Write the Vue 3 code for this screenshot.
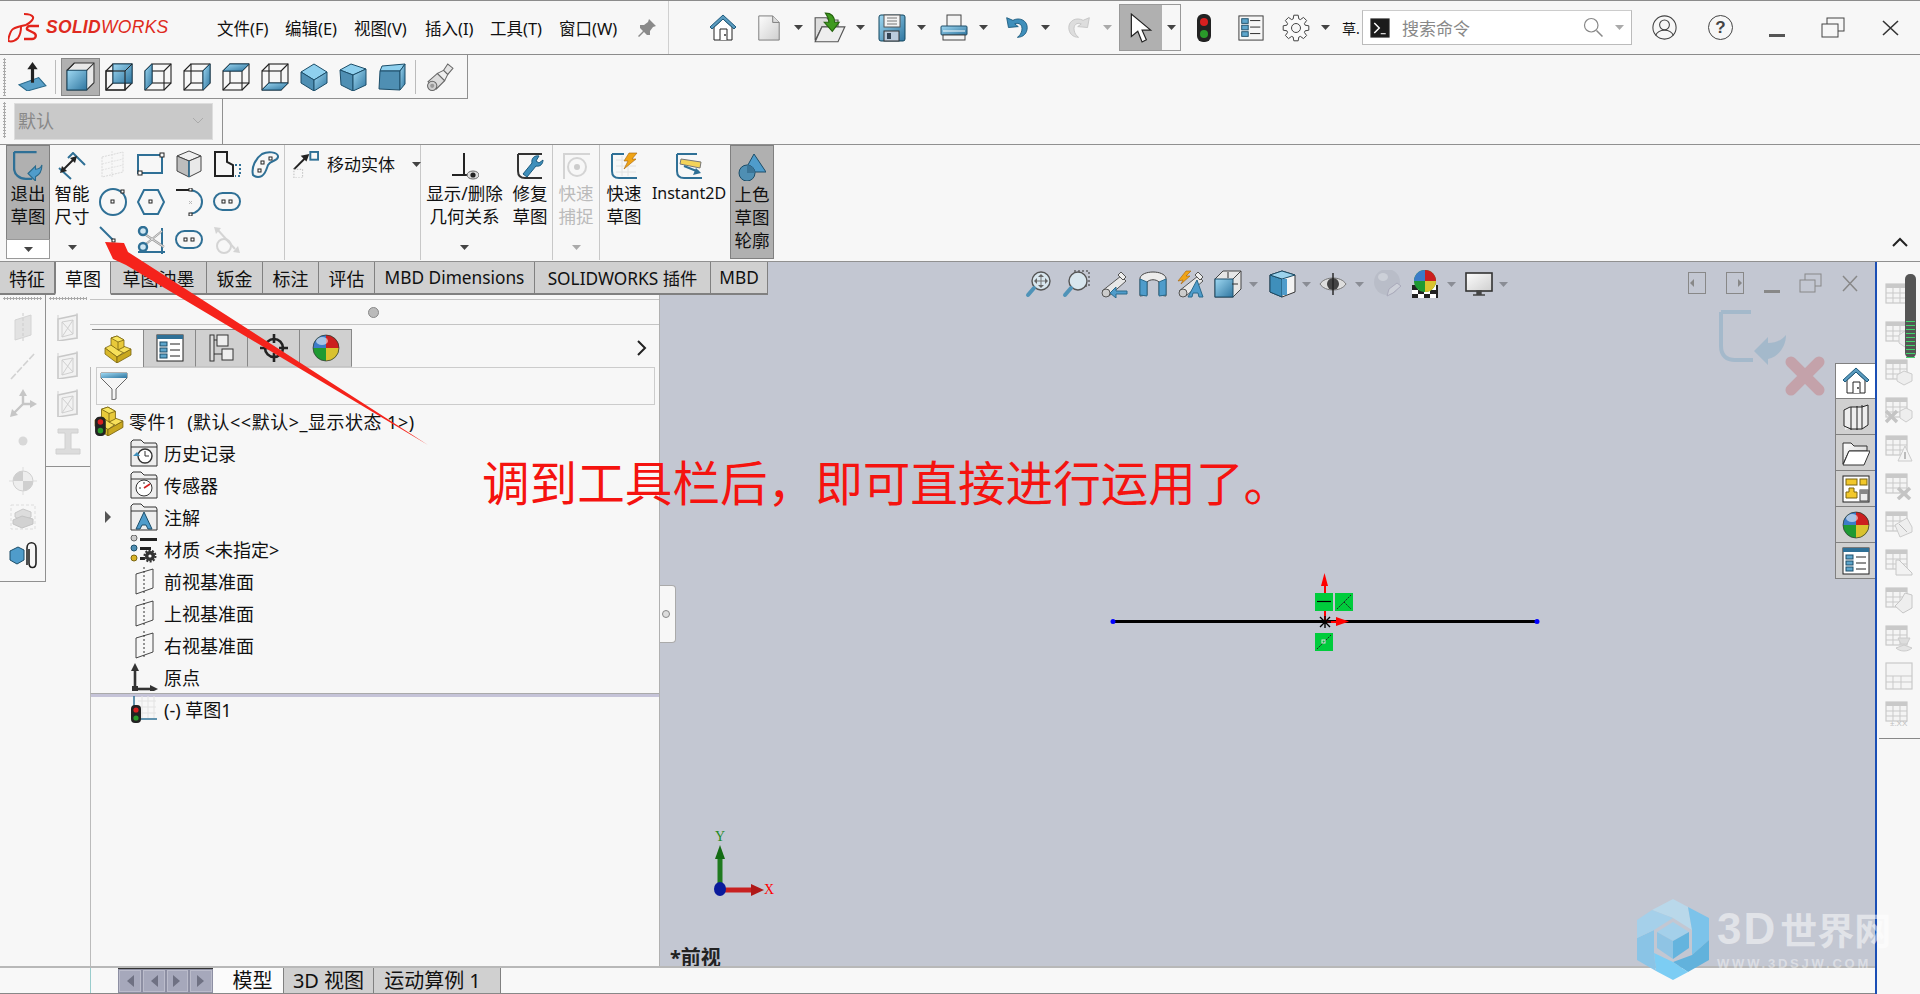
<script setup>
import { h } from 'vue'

const S = '#2f7096'
const wire = 'fill="none" stroke="#222" stroke-width="1.1"'
const cubeFrame = `<rect x="1" y="8" width="19" height="19" ${wire}/><rect x="8" y="1" width="19" height="19" ${wire}/><path d="M1 8 8 1M20 8l7-7M1 27l7-7M20 27l7-7" ${wire}/>`
const face = p => `<polygon points="${p}" fill="url(#gBlue)" stroke="#1c4d68"/>`
const iso = (a, b, c) => `<polygon points="${a}" fill="#8fd0ee" stroke="#1c4d68"/><polygon points="${b}" fill="#4f8fb3" stroke="#1c4d68"/><polygon points="${c}" fill="url(#gBlue)" stroke="#1c4d68"/>`

const gear = (() => {
  const pts = []
  const n = 8
  for (let i = 0; i < n; i++) {
    const a = (i / n) * Math.PI * 2
    for (const [r, d] of [[9.5, -0.3], [13, -0.17], [13, 0.17], [9.5, 0.3]]) {
      pts.push((14 + r * Math.cos(a + d)).toFixed(1) + ',' + (14 + r * Math.sin(a + d)).toFixed(1))
    }
  }
  return `<polygon points="${pts.join(' ')}" fill="#fafafa" stroke="#444" stroke-width="1"/><circle cx="14" cy="14" r="4.5" fill="#f7f7f7" stroke="#444"/>`
})()

const tbl = (extra = '', c = '#c9c9c9') => `<rect x="1" y="2" width="21" height="19" fill="#f4f4f4" stroke="${c}" stroke-width="1.2"/><rect x="1" y="2" width="21" height="4" fill="${c}"/><path d="M1 11h21M1 16h21M8 6v15M15 6v15" stroke="${c}" fill="none"/>${extra}`
const frame = '<polygon points="4,6 23,2 23,25 4,28" fill="#f2f2f2" stroke="#c8c8c8" stroke-width="1.5"/><polygon points="8,9 19,7 19,21 8,24" fill="none" stroke="#d0d0d0"/><path d="M8 9 19 21M19 7 8 24M4 2v26M23 0v26" stroke="#cfcfcf" fill="none"/>'
const plane = '<polygon points="6,7 23,2 23,21 6,27" fill="none" stroke="#333" stroke-width=".9"/><path d="M14 0v28" stroke="#333" stroke-dasharray="2 2" fill="none"/>'
const ball = '<circle cx="14" cy="14" r="13" fill="#1f9a32"/><path d="M14 14V1A13 13 0 0 0 1 14z" fill="#3c7cc8"/><path d="M14 14V1a13 13 0 0 1 13 13z" fill="#cc1f1f"/><path d="M14 14h13a13 13 0 0 1-13 13z" fill="#d9c22e"/><ellipse cx="10" cy="7" rx="6" ry="4" fill="#fff" opacity=".55"/><circle cx="14" cy="14" r="13" fill="none" stroke="#333" stroke-width=".7"/>'
const listIco = `<rect x="1" y="1" width="26" height="26" fill="#fff" stroke="#222"/><rect x="1" y="1" width="26" height="4" fill="${S}"/><rect x="4" y="8" width="7" height="4" fill="#5ea6cc" stroke="#1c4d68"/><rect x="4" y="14" width="7" height="4" fill="#5ea6cc" stroke="#1c4d68"/><rect x="4" y="20" width="7" height="4" fill="#5ea6cc" stroke="#1c4d68"/><path d="M14 10h10M14 16h10M14 22h10" stroke="#222"/>`
const homeIco = `<path d="M5 13v13h18V13L14 5z" fill="#fff" stroke="#222"/><path d="M1 13 14 1l13 12-2 2L14 5 3 15z" fill="#5a9bbf" stroke="#1d5a7d"/><path d="M11 26V15h7v11" fill="#fff" stroke="#222"/><circle cx="16" cy="21" r=".9" fill="#222"/>`
const part = '<g stroke="#7a6510" stroke-width=".8"><polygon points="1,13 7,10 20,17 13,22" fill="#f7e05a"/><polygon points="1,13 13,22 13,28 1,19" fill="#d9b82a"/><polygon points="13,22 27,14 27,20 13,28" fill="#c9a820"/><polygon points="19,11 27,14 20,18 14,15" fill="#f7e05a"/><polygon points="7,3 13,1 20,5 20,12 14,15 7,10" fill="#e8c93a"/><polygon points="7,3 13,1 20,5 14,7" fill="#f9e660"/><path d="M14 7v8" fill="none"/></g>'
const lights = '<rect x="1" y="10" width="10" height="18" rx="4" fill="#222"/><circle cx="6" cy="15" r="2.6" fill="#d81f1f"/><circle cx="6" cy="23" r="2.6" fill="#2a9a2a"/>'
const folder = inner => `<path d="M1 27V3l2-2h8l3 3h12l1 2v21z" fill="#eee" stroke="#333"/><path d="M1 8h26" stroke="#333"/>${inner}`
const grayMag = (x) => `<circle cx="16" cy="11" r="9" fill="#d8e6ee" stroke="#555" stroke-width="1.4"/><path d="M9 18 3 25" stroke="#4f93b8" stroke-width="4" stroke-linecap="round"/>${x}`
const bino = '<path d="M2 21 21 6l5 5L9 26z" fill="#e8e8e8" stroke="#555"/><circle cx="6" cy="23" r="4" fill="#ccc" stroke="#555"/><path d="M18 5l3-3 5 5-3 3z" fill="#eee" stroke="#555"/>'

const icons = {
  normal: '<path d="M14 19V5" stroke="#222" stroke-width="3"/><polygon points="14,0 9,7 19,7" fill="#222"/><polygon points="1,22 20,15 27,23 9,28" fill="#5aa0c8" stroke="#2a6a8c"/><path d="M14 20V8" stroke="#222" stroke-width="3"/>',
  vFront: `<polygon points="8,1 27,1 27,20 20,27 1,27 1,8" fill="#e8e8e8" stroke="#333"/><rect x="1" y="8" width="19" height="19" fill="url(#gBlue)" stroke="#1c4d68"/><path d="M20 8l7-7M1 8l7-7" stroke="#333"/>`,
  vBack: cubeFrame + `<rect x="8" y="1" width="19" height="19" fill="url(#gBlue)" stroke="#1c4d68"/><path d="M1 8 8 1M20 8l7-7" stroke="#222"/><rect x="1" y="8" width="19" height="19" fill="none" stroke="#222" stroke-width="1.1"/>`,
  vLeft: cubeFrame + face('1,8 8,1 8,20 1,27'),
  vRight: cubeFrame + face('20,8 27,1 27,20 20,27'),
  vTop: cubeFrame + face('1,8 8,1 27,1 20,8'),
  vBottom: cubeFrame + face('1,27 8,20 27,20 20,27'),
  iso1: iso('14,1 27,9 14,17 1,9', '1,9 14,17 14,28 1,20', '27,9 14,17 14,28 27,20'),
  iso2: iso('12,1 27,6 14,12 1,7', '1,7 14,12 14,28 2,22', '27,6 14,12 14,28 27,22'),
  iso3: iso('4,3 27,1 22,8 2,8', '2,8 22,8 22,27 1,26', '27,1 22,8 22,27 27,21'),
  torch: '<path d="M2 19 11 11l7 7-8 8z" fill="#dcdcdc" stroke="#666"/><path d="M11 11l6-3 4 4-3 6z" fill="#eee" stroke="#666"/><path d="M17 8l4-6 5 4-5 6z" fill="#e4e4e4" stroke="#666"/><circle cx="6" cy="23" r="4.5" fill="#cfcfcf" stroke="#666"/><circle cx="6" cy="23" r="2" fill="#999"/>',
  home: homeIco,
  doc: '<path d="M3 1h15l7 7v19H3z" fill="url(#gGray)" stroke="#777"/><path d="M18 1v7h7" fill="#ddd" stroke="#777"/>',
  open: '<path d="M1 25V5h10l2 2h8v6H7z" fill="#ddd" stroke="#555"/><path d="M1 26l6-13h20l-6 13z" fill="#eee" stroke="#555"/><path d="M10 1c6 0 8 3 8 8h4l-6 8-7-8h4c0-3-1-5-3-8z" fill="#3f9a1f" stroke="#26660f"/>',
  save: '<rect x="1" y="1" width="26" height="26" rx="2" fill="url(#gBlue)" stroke="#12465f"/><rect x="6" y="1" width="16" height="12" fill="#f3f3f3" stroke="#555"/><path d="M9 4h10M9 7h10M9 10h10" stroke="#777"/><rect x="6" y="17" width="15" height="10" fill="#bcd" stroke="#333"/><rect x="9" y="19" width="4" height="6" fill="#345"/>',
  print: '<rect x="7" y="1" width="14" height="12" fill="#f4f4f4" stroke="#444"/><rect x="1" y="12" width="26" height="9" rx="1" fill="url(#gBlue)" stroke="#1c4d68"/><path d="M3 17h22" stroke="#fff"/><rect x="3" y="21" width="22" height="5" fill="#f4f4f4" stroke="#444"/>',
  undo: '<path d="M3 3l2 11 11-1-4-3c5-2 9 1 8 7-.5 3-2 6-5 8 7 0 11-5 11-11C26 6 17 2 10 6z" fill="#3f8fbb" stroke="#1c5b7e"/>',
  redo: '<path d="M25 3l-2 11-11-1 4-3c-5-2-9 1-8 7 .5 3 2 6 5 8-7 0-11-5-11-11C2 6 11 2 18 6z" fill="#ddd" stroke="#c4c4c4"/>',
  cursor: '<path d="M5 1v21l6-5 4 10 4-2-4-9h8z" fill="#fff" stroke="#222" stroke-width="1.1"/>',
  light: '<rect x="7" y="0" width="14" height="28" rx="6" fill="#222"/><circle cx="14" cy="8" r="4" fill="#d81f1f"/><circle cx="14" cy="20" r="4" fill="#2a9a2a"/>',
  list: `<rect x="1" y="1" width="26" height="26" fill="#f7f7f7" stroke="#333"/><rect x="4" y="4" width="7" height="5" fill="#5ea6cc" stroke="#1c4d68"/><rect x="4" y="11" width="7" height="5" fill="#5ea6cc" stroke="#1c4d68"/><rect x="4" y="18" width="7" height="5" fill="#5ea6cc" stroke="#1c4d68"/><path d="M13 6h11M13 13h11M13 20h11" stroke="#222"/>`,
  gear,
  term: '<rect x="1" y="1" width="26" height="26" fill="#1b1b1b" stroke="#555"/><path d="M6 7l7 7-7 7" fill="none" stroke="#fff" stroke-width="2"/><path d="M15 22h7" stroke="#fff" stroke-width="1.5"/>',
  mag: '<circle cx="11" cy="11" r="9" fill="none" stroke="#888" stroke-width="1.6"/><path d="M18 18l8 8" stroke="#888" stroke-width="2"/>',
  user: '<circle cx="14" cy="14" r="13" fill="none" stroke="#444" stroke-width="1.2"/><circle cx="14" cy="11" r="5.5" fill="none" stroke="#444" stroke-width="1.2"/><path d="M4 23c2-5 6-6 10-6s8 1 10 6" fill="none" stroke="#444" stroke-width="1.2"/>',
  exit: `<path d="M1 1v15c0 6 5 10 11 10h6M1 1h21" fill="none" stroke="${S}" stroke-width="2.2"/><path d="M14 21l7-7v3c2 0 5-1 6-4 0 6-2 9-6 11v4z" fill="#4f9ccb" stroke="#2a6a8c"/>`,
  dim: `<path d="M10 6 15 1l12 12M1 16l12 11" fill="none" stroke="${S}" stroke-width="2"/><path d="M5 18 16 7" stroke="#222" stroke-width="2"/><polygon points="2,21 4,14 9,19" fill="#222"/><polygon points="19,4 12,6 17,11" fill="#222"/>`,
  faintGrid: '<polygon points="3,7 24,2 24,22 3,27" fill="none" stroke="#dadada" stroke-dasharray="2 1"/><path d="M13 1v26M3 14l21-5M3 20l21-5" stroke="#e2e2e2" stroke-dasharray="2 1" fill="none"/>',
  rect: `<rect x="1" y="5" width="24" height="18" fill="none" stroke="${S}" stroke-width="2"/><rect x="23" y="3" width="4" height="4" fill="#fff" stroke="#222"/><rect x="1" y="21" width="4" height="4" fill="#fff" stroke="#222"/>`,
  cube: '<polygon points="14,1 26,6 14,11 2,6" fill="#f0f0f0" stroke="#444"/><polygon points="2,6 14,11 14,27 2,21" fill="#bdbdbd" stroke="#444"/><polygon points="26,6 14,11 14,27 26,21" fill="#e9e9e9" stroke="#444"/><path d="M14 11v16" stroke="#2f7096" stroke-width="1.5"/>',
  offset: `<path d="M2 2h12v10l6 3v11H2z" fill="none" stroke="#222" stroke-width="2"/><path d="M22 15h5v11h-5" fill="none" stroke="${S}" stroke-width="2" stroke-dasharray="2 2"/>`,
  spline: `<path d="M2 25c-2-8 3-17 9-21 6-3 15-2 16 2 1 5-7 4-10 9-2 6-4 12-10 12-3 0-4-1-5-2z" fill="none" stroke="${S}" stroke-width="2"/><rect x="10" y="11" width="3" height="3" fill="#fff" stroke="#222"/><rect x="18" y="7" width="3" height="3" fill="#fff" stroke="#222"/><rect x="7" y="19" width="3" height="3" fill="#fff" stroke="#222"/>`,
  circle: `<circle cx="14" cy="14" r="13" fill="none" stroke="${S}" stroke-width="2"/><rect x="12" y="12" width="3" height="3" fill="#fff" stroke="#222"/><rect x="22" y="2" width="3" height="3" fill="#fff" stroke="#222"/>`,
  hex: `<polygon points="7,2 21,2 27,14 21,26 7,26 1,14" fill="none" stroke="${S}" stroke-width="2"/><rect x="12" y="12" width="3" height="3" fill="#fff" stroke="#222"/>`,
  arc: `<path d="M1 2h14" stroke="#222" stroke-width="2"/><path d="M15 2c8 1 12 6 12 12s-5 11-12 12" fill="none" stroke="${S}" stroke-width="2"/><rect x="14" y="0" width="3" height="3" fill="#fff" stroke="#222"/><rect x="14" y="25" width="3" height="3" fill="#fff" stroke="#222"/><path d="M14 13l3 3M17 13l-3 3" stroke="#bbb"/>`,
  slot: `<rect x="1" y="5" width="26" height="17" rx="8.5" fill="none" stroke="${S}" stroke-width="2"/><rect x="9" y="12" width="3" height="3" fill="#fff" stroke="#222"/><rect x="16" y="12" width="3" height="3" fill="#fff" stroke="#222"/>`,
  line: `<path d="M1 1l13 13" stroke="${S}" stroke-width="2"/><rect x="13" y="13" width="3" height="3" fill="#fff" stroke="#222"/>`,
  trim: `<path d="M25 2v26M1 26h27" stroke="${S}" stroke-width="2"/><path d="M9 9 27 21M9 18 25 5" stroke="#999" stroke-width="2.2"/><path d="M9 9 27 21M9 18 25 5" stroke="#eee" stroke-width=".8"/><circle cx="6" cy="5" r="4" fill="#cfe6f2" stroke="#2f7096" stroke-width="2.4"/><circle cx="6" cy="21" r="4" fill="#cfe6f2" stroke="#2f7096" stroke-width="2.4"/>`,
  mirror: '<circle cx="11" cy="20" r="7" fill="none" stroke="#d4d4d4" stroke-width="2"/><path d="M4 3l18 20" stroke="#d4d4d4" stroke-width="2"/><polygon points="1,1 8,2 3,8" fill="#d4d4d4"/><polygon points="27,27 20,26 25,20" fill="#d4d4d4"/>',
  move: `<path d="M2 19 14 7" stroke="#222" stroke-width="2"/><polygon points="18,3 9,5 15,11" fill="#222"/><rect x="19" y="1" width="8" height="8" fill="none" stroke="${S}" stroke-width="2"/><rect x="2" y="19" width="9" height="9" fill="none" stroke="#bbb" stroke-dasharray="1.5 1.5"/>`,
  relate: '<path d="M13 1v21M1 23h17" stroke="#222" stroke-width="2" fill="none"/><ellipse cx="22" cy="23" rx="6" ry="4" fill="#ddd" stroke="#666"/><circle cx="22" cy="23" r="2.6" fill="#222"/>',
  repair: `<path d="M2 2v17c0 5 3 7 7 7h17M2 2h24" fill="none" stroke="#333" stroke-width="2"/><path d="M7 22l4 3 9-11c4 1 7-2 7-6l-4 3-3-2 3-5c-4-1-8 2-7 7z" fill="#3f8fbb" stroke="#1c5b7e"/>`,
  snap: '<path d="M2 27V2h26" fill="none" stroke="#d4d4d4" stroke-width="2"/><circle cx="15" cy="15" r="9" fill="none" stroke="#d4d4d4" stroke-width="2"/><circle cx="15" cy="15" r="3" fill="#ccc"/>',
  rapid: `<path d="M2 2v17c0 5 3 7 7 7h18M2 2h12" fill="none" stroke="${S}" stroke-width="2"/><path d="M6 8h20M6 14h20M6 20h20M12 4v20M18 10v14" stroke="#e2e2e2" fill="none"/><polygon points="19,1 27,1 22,7 26,7 14,17 18,9 14,9" fill="#f0a416" stroke="#a5620a" stroke-width=".6"/>`,
  i2d: `<path d="M2 2v17c0 5 3 7 7 7h18M2 2h20" fill="none" stroke="${S}" stroke-width="2"/><polygon points="6,7 26,10 25,16 5,12" fill="#f3d35a" stroke="#777"/><path d="M9 14 24 20" stroke="${S}" stroke-width="2"/><polygon points="26,21 18,23 21,16" fill="${S}"/>`,
  shaded: `<polygon points="16,1 28,19 6,19" fill="#4f9ccb" stroke="#1c4d68"/><circle cx="9" cy="20" r="8" fill="#4f8fb3" stroke="#1c4d68"/><path d="M9 12a8 8 0 0 1 8 8H9z" fill="#3b7597"/>`,
  part,
  list2: listIco,
  tree: '<rect x="9" y="1" width="11" height="11" fill="#eee" stroke="#333"/><rect x="14" y="15" width="11" height="11" fill="#eee" stroke="#333"/><rect x="2" y="1" width="4" height="26" fill="#ddd" stroke="#333"/><path d="M6 6h3M6 20h8" stroke="#333"/>',
  target: '<circle cx="14" cy="14" r="9" fill="none" stroke="#222" stroke-width="2.6"/><path d="M14 0v9M14 19v9M0 14h9M19 14h9" stroke="#222" stroke-width="2.6"/>',
  ball,
  funnel: '<path d="M1 1h26v5L16 17v10l-4 1V17L1 6z" fill="#f5f5f5" stroke="#666"/><path d="M1 1h26v5H1z" fill="url(#gBlue)"/>',
  hist: folder('<circle cx="15" cy="17" r="7" fill="#fff" stroke="#333" stroke-width="1.4"/><path d="M15 12v5h4" stroke="#333" fill="none"/><path d="M3 17l4-4 3 4z" fill="#3f8fbb"/>'),
  sensor: folder('<circle cx="14" cy="17" r="8" fill="#fff" stroke="#333"/><path d="M14 17l6-4" stroke="#d02020" stroke-width="1.6"/><path d="M9 17h2M14 11v2" stroke="#333"/>'),
  anno: folder('<polygon points="14,9 22,26 18,26 16,22 12,22 10,26 6,26" fill="#4f9ccb" stroke="#1c4d68"/>'),
  mat: '<circle cx="4" cy="3" r="3" fill="#ccc" stroke="#666"/><circle cx="4" cy="13" r="3" fill="#4f8fb3" stroke="#1c4d68"/><circle cx="4" cy="23" r="3" fill="#d9b426" stroke="#7a6510"/><path d="M10 3h17v3H10zM10 12h11v3H10zM10 22h5v3h-5z" fill="#222"/><circle cx="20" cy="21" r="5" fill="#333"/><circle cx="20" cy="21" r="5.5" fill="none" stroke="#333" stroke-width="2" stroke-dasharray="2 1.4"/><circle cx="20" cy="21" r="1.6" fill="#fff"/>',
  plane,
  origin: '<path d="M5 26V6" stroke="#333" stroke-width="2.6"/><polygon points="5,0 1,8 9,8" fill="#333"/><path d="M5 26h18" stroke="#333" stroke-width="2.6"/><polygon points="28,26 20,22 20,30" fill="#333"/><rect x="2" y="23" width="6" height="6" fill="#333"/>',
  sketchTree: `<path d="M4 1v12" stroke="${S}" stroke-width="1.5"/><path d="M8 24h19" stroke="${S}" stroke-width="1.5"/><path d="M8 6h18M8 12h18M8 18h18M12 1v22M18 1v22M24 1v22" stroke="#e3e3e3"/>${lights}`,
  partLight: part + lights,
  sPlane: '<polygon points="6,7 22,2 22,22 6,27" fill="#e2e2e2" stroke="#d4d4d4"/><path d="M14 0v28" stroke="#ccc" stroke-dasharray="3 2"/>',
  sAxis: '<path d="M2 27 26 1" stroke="#d2d2d2" stroke-width="1.6" stroke-dasharray="7 2"/>',
  sCoord: '<path d="M14 15V4M14 15 4 25M14 15h11" stroke="#c6c6c6" stroke-width="2.4"/><polygon points="14,0 10,7 18,7" fill="#c6c6c6"/><polygon points="28,15 21,11 21,19" fill="#c6c6c6"/><polygon points="1,28 3,20 9,26" fill="#c6c6c6"/>',
  sPoint: '<circle cx="14" cy="14" r="4.5" fill="#d8d8d8"/>',
  sCog: '<circle cx="14" cy="14" r="10" fill="#eee" stroke="#d0d0d0"/><path d="M14 14V4A10 10 0 0 0 4 14zM14 14v10a10 10 0 0 0 10-10z" fill="#cfcfcf"/><path d="M14 0v4M14 24v4M0 14h4M24 14h4" stroke="#ddd"/>',
  sBoxes: '<rect x="2" y="2" width="24" height="24" fill="none" stroke="#ddd" stroke-dasharray="3 2"/><polygon points="6,10 14,6 22,9 22,14 14,18 6,14" fill="#ddd" stroke="#c8c8c8"/><polygon points="4,17 13,13 24,16 24,21 13,25 4,21" fill="#d2d2d2" stroke="#c4c4c4"/>',
  clip: '<polygon points="1,10 9,6 15,9 15,19 8,23 1,19" fill="#4f9ccb" stroke="#1c4d68"/><path d="M18 24V7c0-7 9-7 9 0v15c0 6-7 6-7 0V8" fill="none" stroke="#222" stroke-width="1.6"/>',
  fFrame: frame,
  ibeam: '<path d="M4 2h20v4h-7v16h9v5H2v-5h9V6H4z" fill="#dcdcdc" stroke="#d0d0d0"/>',
  zoomFit: grayMag('<path d="M16 5v12M10 11h12" stroke="#777" stroke-width="1" /><polygon points="16,4 13,7 19,7" fill="#666"/><polygon points="16,18 13,15 19,15" fill="#666"/><polygon points="9,11 12,8 12,14" fill="#666"/><polygon points="23,11 20,8 20,14" fill="#666"/>'),
  zoomBox: `<rect x="12" y="1" width="15" height="15" fill="none" stroke="#333" stroke-dasharray="2 2"/>` + grayMag(''),
  prevView: bino + '<path d="M27 21H16v-4l-6 6 6 5v-4h11z" fill="#4f9ccb" stroke="#2a6a8c"/>',
  section: '<path d="M1 26V8c2-8 24-8 26 0v18l-7-1V12c-3-3-9-3-12 0v13z" fill="#ececec" stroke="#444"/><path d="M1 9l7 3v14l-7-1zM27 9l-7 3v14l7-1z" fill="#4f9ccb" stroke="#2a6a8c"/>',
  dynAnno: bino + '<polygon points="1,11 9,1 14,1 9,6 13,6 4,14 6,10" fill="#f0a416" stroke="#a5620a" stroke-width=".6"/><polygon points="20,10 26,27 22,27 21,23 16,23 15,27 11,27" fill="#4f9ccb" stroke="#2a6a8c"/>',
  viewOrient: '<polygon points="9,1 27,1 27,19 19,27 1,27 1,9" fill="#e6e6e6" stroke="#444"/><rect x="1" y="9" width="18" height="18" fill="url(#gBlue)" stroke="#1c4d68"/><path d="M19 9l8-8" stroke="#444"/><path d="M14 2v6M24 14h-6" stroke="#333"/>',
  display: '<polygon points="14,1 27,5 27,22 14,27 2,22 2,5" fill="#f3f3f3" stroke="#333"/><polygon points="2,5 14,9 14,27 2,22" fill="#3f8fbb" stroke="#1c4d68"/><polygon points="14,1 27,5 14,9 2,5" fill="#9dd3ec" stroke="#1c4d68"/><rect x="14" y="9" width="5" height="16" fill="#4f9ccb"/>',
  eye: '<path d="M1 14C6 6 22 6 27 14 22 22 6 22 1 14z" fill="#ddd" stroke="#777"/><circle cx="14" cy="14" r="6" fill="#444"/><path d="M14 3v22" stroke="#222" stroke-width="1.4"/>',
  edit: '<circle cx="14" cy="12" r="13" fill="#b9bdc8"/><ellipse cx="10" cy="7" rx="5" ry="4" fill="#ccd0d8"/><path d="M14 26l2-7 8-6 4 3-8 7z" fill="#cdd0d8" stroke="#aab"/>',
  scene: '<rect x="1" y="15" width="26" height="13" fill="#222"/><path d="M1 20h6v4H1zM13 20h6v4h-6zM7 15h6v5H7zM19 15h6v5h-6zM7 24h6v4H7zM19 24h6v4h-6z" fill="#fff"/><circle cx="14" cy="11" r="11" fill="#1f9a32"/><path d="M14 11V0A11 11 0 0 0 3 11z" fill="#3c7cc8"/><path d="M14 11V0a11 11 0 0 1 11 11z" fill="#cc1f1f"/><path d="M14 11h11a11 11 0 0 1-11 11z" fill="#d9c22e"/>',
  monitor: '<rect x="1" y="3" width="26" height="18" fill="url(#gGray)" stroke="#333" stroke-width="1.6"/><path d="M12 21h4v3h-4zM8 25h12" stroke="#444" stroke-width="1.4" fill="#444"/>',
  tHome: homeIco,
  books: '<polygon points="3,6 9,3 9,24 3,27" fill="#eee"/><path d="M2 7l6-3 12 0 6-2v20l-6 4H9l-7-3z" fill="#eee" stroke="#222"/><path d="M9 4v23M15 3v24M20 2v24" stroke="#222"/>',
  tFolder: '<path d="M1 25V4h8l3 3h13v5H7z" fill="url(#gGray)" stroke="#333"/><path d="M1 26l6-14h21l-6 14z" fill="#fff" stroke="#333"/>',
  layout: '<rect x="1" y="1" width="26" height="26" fill="#fff" stroke="#222"/><rect x="4" y="4" width="11" height="6" fill="#f2c82a" stroke="#7a6510"/><rect x="18" y="4" width="7" height="6" fill="#f2c82a" stroke="#7a6510"/><path d="M4 23v-6h3v-4h5v4h3v6z" fill="#f2c82a" stroke="#7a6510"/><rect x="18" y="15" width="8" height="11" fill="#eee" stroke="#444"/><rect x="18" y="15" width="8" height="4" fill="#888"/>',
  t1: tbl(),
  t2: tbl('<polygon points="14,15 20,11 27,14 27,23 20,27 14,23" fill="#eee" stroke="#ccc"/>'),
  t3: tbl('<polygon points="12,17 19,13 27,16 27,23 19,27 12,23" fill="#eee" stroke="#ccc"/>'),
  t4: tbl('<path d="M1 15 12 26M12 15 1 26" stroke="#c4c4c4" stroke-width="3.4"/><polygon points="15,15 21,12 27,15 27,22 21,26 15,22" fill="#eee" stroke="#ccc"/>'),
  t5: tbl('<polygon points="20,12 27,27 13,27" fill="#f4f4f4" stroke="#ccc"/><path d="M20 18v7" stroke="#aaa" stroke-width="1.5"/>'),
  t6: tbl('<path d="M13 16 25 27M25 16 13 27" stroke="#c4c4c4" stroke-width="3.6"/>'),
  t7: tbl('<polygon points="10,15 22,8 27,17 27,22 15,27" fill="#eee" stroke="#ccc"/><path d="M14 14l8 8" stroke="#bbb"/>'),
  t8: tbl('<polygon points="11,12 14,12 27,25 27,27 11,27" fill="#f2f2f2" stroke="#c6c6c6"/>'),
  t9: tbl('<polygon points="10,20 16,14 20,7 27,9 27,22 18,27" fill="#eee" stroke="#c6c6c6"/>'),
  t10: tbl('<path d="M13 14h12l-3 6h-6z" fill="#ddd" stroke="#ccc"/><path d="M11 24c4 4 12 4 16 0l-8-3z" fill="#e4e4e4" stroke="#ccc"/>'),
  t11: '<rect x="1" y="1" width="26" height="26" fill="#f4f4f4" stroke="#c9c9c9" stroke-width="1.2"/><path d="M1 14h26M1 20h26M8 14v13M16 14v13" stroke="#c9c9c9"/>',
  t12: tbl() + '<text x="5" y="26" font-family="Liberation Sans, sans-serif" font-size="8" fill="#bdbdbd">±.XX</text>',
  dd: '<polygon points="0,0 9,0 4.5,5" fill="#444"/>',
  ddg: '<polygon points="0,0 9,0 4.5,5" fill="#8a8d95"/>',
  ddl: '<polygon points="0,0 9,0 4.5,5" fill="#aaa"/>'
}

const dims = { dd: [9, 5], ddg: [9, 5], ddl: [9, 5] }
const Ico = (props) => {
  const d = dims[props.n]
  return h('svg', {
    class: 'ico',
    viewBox: d ? `0 0 ${d[0]} ${d[1]}` : '0 0 28 28',
    width: props.w || (d ? d[0] : 28),
    height: props.h || props.w || (d ? d[1] : 28),
    innerHTML: icons[props.n]
  })
}
Ico.props = ['n', 'w', 'h']

const flow = (items, start = 0) => {
  let x = start
  return items.map(([n, l, w, ht]) => {
    const d = dims[n]
    const width = w || (d ? d[0] : 28)
    const m = l - x
    x = l + width
    return { n, w: width, h: ht || (d ? d[1] : width), m }
  })
}

const menus = [['文件(F)', 217], ['编辑(E)', 285], ['视图(V)', 354], ['插入(I)', 425], ['工具(T)', 490], ['窗口(W)', 559]]
const menuFlow = menus.map(([t], i) => ({ t, w: (menus[i + 1] ? menus[i + 1][1] : 637) - menus[i][1] }))

const toolsA = flow([['home', 708, 28], ['doc', 755, 26], ['dd', 793], ['open', 813, 32], ['dd', 855], ['save', 877, 28], ['dd', 916], ['print', 939, 28], ['dd', 978], ['undo', 1003, 25], ['dd', 1040], ['redo', 1066, 25], ['ddl', 1102]], 668)
const toolsB = flow([['light', 1189, 28], ['list', 1237, 26], ['gear', 1281, 28], ['dd', 1320]], 1180)

const tb1 = flow([['vFront', 66, 29], ['vBack', 105, 28], ['vLeft', 144, 28], ['vRight', 183, 28], ['vTop', 222, 28], ['vBottom', 261, 28], ['iso1', 300, 28], ['iso2', 339, 28], ['iso3', 378, 28]], 66)

const smallGrid = ['faintGrid', 'rect', 'cube', 'offset', 'spline', 'circle', 'hex', 'arc', 'slot', '', 'line', 'trim', 'slot', 'mirror', '']

const tabs = [['特征', 55], ['草图', 56, true], ['草图油墨', 96], ['钣金', 56], ['标注', 56], ['评估', 56], ['MBD Dimensions', 160, false, true], ['SOLIDWORKS 插件', 176, false, true], ['MBD', 57, false, true]]

const strip1 = flow([['sPlane', 313], ['sAxis', 352], ['sCoord', 389], ['sPoint', 427], ['sCog', 467], ['sBoxes', 503], ['clip', 541]].map(([n, y]) => [n, y, 28]), 301)
const strip2 = flow([['fFrame', 313], ['fFrame', 351], ['fFrame', 389], ['ibeam', 427]].map(([n, y]) => [n, y, 28]), 301)

const fmTabs = ['part', 'list2', 'tree', 'target', 'ball']
const tree = [
  ['hist', '历史记录'], ['sensor', '传感器'], ['anno', '注解', true], ['mat', '材质 <未指定>'],
  ['plane', '前视基准面'], ['plane', '上视基准面'], ['plane', '右视基准面'], ['origin', '原点']
]

const hud = flow([['zoomFit', 1025], ['zoomBox', 1062], ['prevView', 1100], ['section', 1139], ['dynAnno', 1177], ['viewOrient', 1214], ['ddg', 1249, 9, 5], ['display', 1268], ['ddg', 1302, 9, 5], ['eye', 1319], ['ddg', 1355, 9, 5], ['edit', 1373], ['scene', 1411], ['ddg', 1447, 9, 5], ['monitor', 1465], ['ddg', 1499, 9, 5]], 1025)

const taskTabs = ['tHome', 'books', 'tFolder', 'layout', 'ball', 'list2']
const rstrip = ['t1', 't2', 't3', 't4', 't5', 't6', 't7', 't8', 't9', 't10', 't11', 't12']
const bottomTabs = [['模型', 71, true], ['3D 视图', 90], ['运动算例 1', 127]]
</script>

<template>
  <div class="app">
    <svg class="defs" width="0" height="0">
      <defs>
        <linearGradient id="gBlue" x1="0" y1="0" x2="1" y2="1"><stop offset="0" stop-color="#9fd8f2" /><stop offset="1" stop-color="#2f76a0" /></linearGradient>
        <linearGradient id="gGray" x1="0" y1="0" x2="1" y2="1"><stop offset="0" stop-color="#fdfdfd" /><stop offset="1" stop-color="#cfcfcf" /></linearGradient>
      </defs>
    </svg>

    <header class="title">
      <div class="logo">
        <svg width="32" height="30" viewBox="0 0 32 30" class="ds">
          <path d="M16 1c4 0 8 1 9 3s-3 6-7 8" fill="none" stroke="#e2231a" stroke-width="2" />
          <path d="M18 12c-5 1-10 2-13 4-3 2-4 7-5 12 3 1 7 0 10-3 2-3 3-7 3-11" fill="none" stroke="#e2231a" stroke-width="2" />
          <path d="M31 13H22c-3 0-4 3-2 4l6 3c3 2 2 6-2 6h-8" fill="none" stroke="#e2231a" stroke-width="2.400" />
        </svg>
        <span class="logo-text"><b>SOLID</b>WORKS</span>
      </div>
      <nav class="menu">
        <span v-for="m in menuFlow" :key="m.t" :style="{ width: m.w + 'px' }">{{ m.t }}</span>
      </nav>
      <svg class="pin" width="20" height="20" viewBox="0 0 20 20"><path d="M12 1l7 7-3 1-3 4 0 4-3 0-3-3-5 5-1-1 5-5-3-3 0-3 4 0 4-3z" fill="#8a8a8a" /></svg>
      <div class="tsep"></div>
      <Ico v-for="(t, i) in toolsA" :key="'a' + i" :n="t.n" :w="t.w" :h="t.h" :style="{ marginLeft: t.m + 'px' }" />
      <div class="selbtn">
        <span class="selon"><Ico n="cursor" :w="30" /></span>
        <span class="seldd"><Ico n="dd" /></span>
      </div>
      <Ico v-for="(t, i) in toolsB" :key="'b' + i" :n="t.n" :w="t.w" :h="t.h" :style="{ marginLeft: t.m + 'px' }" />
      <span class="clip-txt">草.</span>
      <div class="search">
        <Ico n="term" :w="20" />
        <span class="search-txt">搜索命令</span>
        <Ico class="search-mag" n="mag" :w="21" />
        <Ico class="search-dd" n="ddl" />
      </div>
      <Ico class="t-user" n="user" :w="25" />
      <span class="help">?</span>
      <svg class="wb-min" width="16" height="3"><rect width="16" height="3" fill="#555" /></svg>
      <svg class="wb-res" width="24" height="21" viewBox="0 0 24 21"><rect x="6" y="1" width="17" height="13" fill="#f7f7f7" stroke="#444" /><rect x="1" y="7" width="16" height="13" fill="#f7f7f7" stroke="#444" /></svg>
      <svg class="wb-close" width="17" height="16" viewBox="0 0 17 16"><path d="M1 1l15 14M16 1 1 15" stroke="#333" stroke-width="1.6" /></svg>
    </header>

    <div class="tb1">
      <i class="grip"></i>
      <Ico class="tb-normal" n="normal" :w="29" />
      <i class="vsep"></i>
      <div class="tb-views">
        <span class="view-on"><Ico n="vFront" :w="29" /></span>
        <Ico v-for="t in tb1.slice(1)" :key="t.n" :n="t.n" :w="t.w" :h="t.h" class="tb-v" />
      </div>
      <i class="vsep vsep2"></i>
      <Ico class="tb-torch" n="torch" :w="29" />
    </div>

    <div class="tb2">
      <i class="grip grip2"></i>
      <div class="combo"><span>默认</span><svg width="12" height="7" viewBox="0 0 12 7"><path d="M1 1l5 5 5-5" fill="none" stroke="#aaa" /></svg></div>
    </div>

    <div class="ribbon">
      <div class="rb rb-exit">
        <div class="on">
          <Ico n="exit" :w="30" />
          <div class="rb-txt">退出<br />草图</div>
        </div>
        <div class="rb-ddbox"><Ico n="dd" /></div>
      </div>
      <div class="rb rb-dim">
        <Ico n="dim" :w="28" />
        <div class="rb-txt">智能<br />尺寸</div>
        <div class="rb-dd"><Ico n="dd" /></div>
      </div>
      <div class="grid5">
        <span v-for="(g, i) in smallGrid" :key="i" class="cell"><Ico v-if="g" :n="g" :w="28" /></span>
      </div>
      <div class="rmove">
        <Ico n="move" :w="27" />
        <span class="move-t">移动实体</span>
        <Ico class="move-dd" n="dd" />
      </div>
      <div class="rb rb-rel">
        <Ico n="relate" :w="28" />
        <div class="rb-txt">显示/删除<br />几何关系</div>
        <div class="rb-dd"><Ico n="dd" /></div>
      </div>
      <div class="rb rb-rep">
        <Ico n="repair" :w="28" />
        <div class="rb-txt">修复<br />草图</div>
      </div>
      <div class="rb rb-snap">
        <Ico n="snap" :w="28" />
        <div class="rb-txt">快速<br />捕捉</div>
        <div class="rb-dd"><Ico n="ddl" /></div>
      </div>
      <div class="rb rb-rap">
        <Ico n="rapid" :w="28" />
        <div class="rb-txt">快速<br />草图</div>
      </div>
      <div class="rb rb-i2d">
        <Ico n="i2d" :w="28" />
        <div class="rb-txt">Instant2D</div>
      </div>
      <div class="rb rb-shade">
        <Ico n="shaded" :w="28" />
        <div class="rb-txt">上色<br />草图<br />轮廓</div>
      </div>
      <svg class="collapse" width="16" height="10" viewBox="0 0 16 10"><path d="M1 9l7-7 7 7" fill="none" stroke="#222" stroke-width="2" /></svg>
    </div>

    <div class="work">
      <div class="workleft">
        <div class="tabs">
          <span v-for="t in tabs" :key="t[0]" class="tab" :class="{ active: t[2], lat: t[3] }" :style="{ width: t[1] + 'px' }">{{ t[0] }}</span>
        </div>
        <div class="main">
          <aside class="strip s1">
            <i class="grip-h"></i>
            <Ico v-for="(t, i) in strip1" :key="i" :n="t.n" :w="28" :style="{ marginTop: t.m + 'px' }" />
          </aside>
          <aside class="strip s2">
            <i class="grip-h"></i>
            <Ico v-for="(t, i) in strip2" :key="i" :n="t.n" :w="28" :style="{ marginTop: t.m + 'px' }" />
          </aside>
          <section class="panel">
            <div class="p-top"><i class="p-dot"></i></div>
            <div class="p-tabs">
              <span v-for="(n, i) in fmTabs" :key="n" class="p-tab" :class="{ active: i === 0 }"><Ico :n="n" :w="28" /></span>
              <svg class="p-chev" width="11" height="16" viewBox="0 0 11 16"><path d="M2 1l7 7-7 7" fill="none" stroke="#222" stroke-width="2" /></svg>
            </div>
            <div class="filter"><Ico n="funnel" :w="28" /></div>
            <div class="row row0"><Ico n="partLight" :w="30" /><span>零件1&nbsp;&nbsp;(默认&lt;&lt;默认&gt;_显示状态 1&gt;)</span></div>
            <div v-for="r in tree" :key="r[1]" class="row">
              <i v-if="r[2]" class="caret"></i>
              <Ico :n="r[0]" :w="28" />
              <span>{{ r[1] }}</span>
            </div>
            <div class="rollback"></div>
            <div class="row row-last"><Ico n="sketchTree" :w="28" /><span>(-) 草图1</span></div>
          </section>
          <section class="canvas">
            <svg class="scene" width="1216" height="671" viewBox="659 295 1216 671">
              <g opacity=".26">
                <path d="M1721 312v34c0 10 6 14 14 14h18M1721 312h30" fill="none" stroke="#4f93b8" stroke-width="4" />
                <path d="M1754 351l14-14v6c8 0 14-3 18-8 0 12-8 22-18 24v6z" fill="#4f93b8" />
                <path d="M1791 362l28 28M1819 362l-28 28" stroke="#c83a3a" stroke-width="11" stroke-linecap="round" />
              </g>
              <path d="M1113 621.500H1537" stroke="#000" stroke-width="3" />
              <circle cx="1113" cy="621.500" r="2.500" fill="#00f" />
              <circle cx="1537" cy="621.500" r="2.500" fill="#00f" />
              <path d="M1325 622V585" stroke="#f00" stroke-width="2" />
              <polygon points="1324.500,573 1321,586 1328,586" fill="#f00" />
              <path d="M1325 622h12" stroke="#f00" stroke-width="2" />
              <polygon points="1349,621.500 1336,617 1336,626" fill="#f00" />
              <path d="M1320 617l10 10M1330 617l-10 10M1319 622h12M1325 616v12" stroke="#000" stroke-width="1.400" />
              <g>
                <rect x="1315" y="593" width="18" height="18" fill="#00cc3c" />
                <path d="M1317 601.500h14" stroke="#000" stroke-width="1.200" />
                <rect x="1335" y="593" width="18" height="18" fill="#00cc3c" />
                <path d="M1337 609l14-14M1344 602l7 7" stroke="#222" stroke-dasharray="2 1" />
                <rect x="1315" y="633" width="18" height="18" fill="#00cc3c" />
                <path d="M1317 649l14-14" stroke="#222" stroke-dasharray="2 1" />
                <rect x="1322" y="640" width="3" height="3" fill="none" stroke="#ddd" />
              </g>
              <path d="M720 889V858" stroke="#1f7a1f" stroke-width="5" />
              <polygon points="720,845 715,859 725,859" fill="#136b13" />
              <path d="M724 890h28" stroke="#c82020" stroke-width="5" />
              <polygon points="764,890 751,884 751,896" fill="#b01818" />
              <ellipse cx="720" cy="889" rx="6" ry="7" fill="#0a1a9c" />
              <text x="720" y="841" class="axis" fill="#1f8a1f" text-anchor="middle">Y</text>
              <text x="769" y="894" class="axis" fill="#f00" text-anchor="middle">X</text>
            </svg>
            <div class="hud">
              <Ico v-for="(t, i) in hud" :key="i" :n="t.n" :w="t.w" :h="t.h" :style="{ marginLeft: t.m + 'px' }" />
            </div>
            <div class="winbtns">
              <svg width="18" height="22" viewBox="0 0 18 22"><rect x=".5" y=".5" width="17" height="21" fill="none" stroke="#888" /><polygon points="2,11 6,7 6,15" fill="#888" /></svg>
              <svg width="18" height="22" viewBox="0 0 18 22"><rect x=".5" y=".5" width="17" height="21" fill="none" stroke="#888" /><polygon points="16,11 12,7 12,15" fill="#888" /></svg>
              <svg width="16" height="22" viewBox="0 0 16 22"><rect y="18" width="16" height="3" fill="#888" /></svg>
              <svg width="23" height="21" viewBox="0 0 23 21"><rect x="6" y="1" width="16" height="12" fill="#c3c7d2" stroke="#888" /><rect x="1" y="7" width="15" height="12" fill="#c3c7d2" stroke="#888" /></svg>
              <svg width="16" height="17" viewBox="0 0 16 17"><path d="M1 1l14 15M15 1 1 16" stroke="#888" stroke-width="1.500" /></svg>
            </div>
            <div class="notch"><i></i></div>
            <div class="task">
              <span v-for="(n, i) in taskTabs" :key="i" class="ttab" :class="{ active: i === 0 }"><Ico :n="n" :w="28" /></span>
            </div>
            <div class="vlabel">*前视</div>
          </section>
        </div>
        <footer class="bottom">
          <div class="nav">
            <span v-for="i in 4" :key="i"><svg width="12" height="14" viewBox="0 0 12 14"><polygon :points="i <= 2 ? '10,1 3,7 10,13' : '2,1 9,7 2,13'" fill="#6f7183" /></svg></span>
          </div>
          <span v-for="t in bottomTabs" :key="t[0]" class="btab" :class="{ active: t[2] }" :style="{ width: t[1] + 'px' }">{{ t[0] }}</span>
        </footer>
      </div>
      <aside class="rstrip">
        <Ico v-for="(n, i) in rstrip" :key="i" :n="n" :w="28" />
        <i class="rline"></i>
        <div class="rscroll"><i v-for="i in 10" :key="i"></i></div>
      </aside>
    </div>

    <svg class="redarrow" viewBox="100 235 340 215">
      <polygon points="105,242 124,243 128,252 428,445 126,265 113,259" fill="#f5231b" />
    </svg>
    <div class="redtext">调到工具栏后，即可直接进行运用了。</div>

    <div class="wm">
      <svg width="74" height="83" viewBox="1636 898 74 83">
        <polygon points="1652,910 1673,899 1688,907 1692,930 1673,918" fill="#b9d8ea" />
        <polygon points="1688,907 1709,918 1709,940 1692,955 1692,930" fill="#7cc3ea" />
        <polygon points="1709,940 1709,960 1688,972 1673,962 1692,955" fill="#62b2dc" />
        <polygon points="1654,953 1673,962 1688,972 1673,980 1656,971" fill="#7ccdf4" />
        <polygon points="1637,938 1654,930 1654,953 1656,971 1637,960" fill="#8ac4e6" />
        <polygon points="1637,920 1652,910 1673,918 1654,930 1637,938" fill="#a5d0ea" />
        <polygon points="1673,922 1689,932 1673,941 1657,932" fill="#a4d0ea" />
        <polygon points="1657,932 1673,941 1673,959 1657,948" fill="#8fc4e4" />
        <polygon points="1689,932 1673,941 1673,959 1689,948" fill="#64b4de" />
      </svg>
      <div class="wm-t">
        <div class="wm-a"><span class="wm-3d">3D</span><span class="wm-cjk">世界网</span></div>
        <div class="wm-b">WWW.3DSJW.COM</div>
      </div>
    </div>
  </div>
</template>

<style>
html, body { margin: 0; padding: 0; background: #f7f7f7; }
</style>

<style scoped>
.app { position: relative; width: 1920px; height: 994px; overflow: hidden; background: #f7f7f7; color: #111; font-family: "Noto Sans", "Noto Sans CJK SC", sans-serif; font-size: 16px; display: flex; flex-direction: column; }
.ico { flex: none; display: block; }
.defs { position: absolute; }
i { display: block; font-style: normal; }

.title { box-sizing: border-box; height: 55px; border-top: 1px solid #8c8c8c; border-bottom: 1px solid #8c8c8c; display: flex; align-items: center; flex: none; }
.logo { width: 217px; flex: none; display: flex; align-items: center; padding-left: 8px; box-sizing: border-box; }
.ds { flex: none; }
.logo-text { margin-left: 6px; font-family: "Liberation Sans", sans-serif; font-style: italic; font-size: 17.500px; color: #df2a20; letter-spacing: .3px; }
.menu { display: flex; font-size: 16.500px; flex: none; width: 420px; }
.menu span { display: block; white-space: nowrap; }
.pin { flex: none; margin-right: 11px; }
.tsep { width: 1px; height: 53px; background: #d0d0d0; flex: none; }
.selbtn { display: flex; height: 47px; margin-left: 7px; flex: none; border: 1px solid #999; box-sizing: border-box; width: 62px; background: #fff; }
.selon { width: 42px; background: #b0b0b0; display: flex; align-items: center; justify-content: center; }
.seldd { flex: 1; display: flex; align-items: center; justify-content: center; background: #f7f7f7; }
.clip-txt { font-size: 14px; margin-left: 12px; width: 17px; flex: none; color: #111; white-space: nowrap; }
.search { margin-left: 3px; width: 270px; height: 35px; box-sizing: border-box; background: #fff; border: 1px solid #bbb; border-top-color: #ccc; display: flex; align-items: center; padding-left: 7px; flex: none; }
.search-txt { margin-left: 12px; color: #888; font-size: 17px; }
.search-mag { margin-left: 113px; }
.search-dd { margin-left: 11px; }
.t-user { margin-left: 20px; }
.help { margin-left: 31px; width: 23px; height: 23px; border: 1.200px solid #444; border-radius: 50%; display: flex; align-items: center; justify-content: center; font-family: "Liberation Sans", sans-serif; font-weight: bold; font-size: 17px; color: #444; flex: none; }
.wb-min { margin-left: 36px; margin-top: 16px; flex: none; }
.wb-res { margin-left: 36px; flex: none; }
.wb-close { margin-left: 37px; flex: none; }

.tb1 { box-sizing: border-box; width: 468px; height: 44px; border-right: 1px solid #909090; border-bottom: 1px solid #909090; display: flex; align-items: center; flex: none; }
.grip { width: 3px; height: 38px; margin-left: 3px; flex: none; background-image: radial-gradient(#aaa 1px, transparent 1.200px); background-size: 3px 3px; }
.grip2 { height: 36px; align-self: flex-start; margin-top: 3px; }
.tb-normal { margin-left: 12px; }
.vsep { width: 1px; height: 34px; background: #bbb; margin-left: 8px; flex: none; }
.vsep2 { margin-left: 9px; }
.tb-views { display: flex; align-items: center; margin-left: 5px; }
.tb-v { margin-left: 11px; }
.view-on { width: 39px; height: 38px; box-sizing: border-box; background: #b0b0b0; border: 1px solid #888; display: flex; align-items: center; justify-content: center; margin-right: -6px; }
.tb-torch { margin-left: 10px; }

.tb2 { box-sizing: border-box; width: 223px; height: 45px; border-right: 1px solid #909090; display: flex; flex: none; }
.combo { margin: 4px 0 0 8px; width: 199px; height: 37px; box-sizing: border-box; background: #c9c9c9; border: 1px solid #ddd; display: flex; align-items: center; justify-content: space-between; padding: 0 8px 3px 3px; color: #888; font-size: 18px; }

.ribbon { position: relative; box-sizing: border-box; height: 118px; border-top: 1px solid #909090; border-bottom: 1px solid #909090; display: flex; flex: none; padding-left: 6px; }
.rb { display: flex; flex-direction: column; align-items: center; flex: none; box-sizing: border-box; padding-top: 7px; }
.rb-txt { line-height: 23px; text-align: center; min-height: 58px; margin-top: 2px; white-space: nowrap; font-size: 17.500px; }
.rb-dd { height: 14px; display: flex; align-items: center; }
.rb-exit { width: 44px; padding-top: 0; }
.rb-exit .on { box-sizing: border-box; width: 44px; height: 94px; background: #b0b0b0; border: 1px solid #808080; border-bottom: 0; display: flex; flex-direction: column; align-items: center; padding-top: 5px; }
.rb-exit .rb-txt { min-height: 0; margin-top: 1px; }
.rb-ddbox { box-sizing: border-box; width: 44px; height: 20px; border: 1px solid #999; background: #fff; display: flex; align-items: center; justify-content: center; }
.rb-dim { width: 44px; }
.grid5 { box-sizing: border-box; width: 191px; flex: none; display: grid; grid-template-columns: repeat(5, 38px); grid-auto-rows: 38px; border-right: 1px solid #c8c8c8; height: 115px; }
.cell { display: flex; align-items: center; justify-content: center; }
.rmove { width: 136px; box-sizing: border-box; flex: none; display: flex; padding: 6px 0 0 7px; height: 115px; border-right: 1px solid #c8c8c8; align-items: flex-start; }
.move-t { margin-left: 8px; font-size: 17px; line-height: 28px; white-space: nowrap; width: 86px; flex: none; }
.move-dd { margin-top: 11px; margin-left: -1px; }
.rb-rel { width: 87px; }
.rb-rep { width: 45px; border-right: 1px solid #c8c8c8; height: 115px; }
.rb-snap { width: 47px; color: #bbb; border-right: 1px solid #c8c8c8; height: 115px; }
.rb-rap { width: 48px; }
.rb-i2d { width: 82px; }
.rb-i2d .rb-txt { font-size: 16px; }
.rb-shade { width: 44px; height: 114px; background: #b0b0b0; border: 1px solid #808080; }
.collapse { position: absolute; right: 12px; top: 92px; }

.work { flex: 1; display: flex; min-height: 0; }
.workleft { width: 1875px; flex: none; display: flex; flex-direction: column; }
.tabs { height: 33px; flex: none; display: flex; background: linear-gradient(#c3c7d2, #c3c7d2) 659px 0 no-repeat; box-sizing: border-box; }
.tab { box-sizing: border-box; height: 33px; background: #d0d0d0; border-right: 1px solid #808080; border-bottom: 2px solid #808080; display: flex; align-items: center; justify-content: center; white-space: nowrap; font-size: 18px; flex: none; }
.tab.lat { font-size: 17.300px; }
.tab.active { background: #f7f7f7; border-bottom-color: #f7f7f7; border-left: 1px solid #808080; }
.main { flex: 1; display: flex; min-height: 0; }
.strip { box-sizing: border-box; flex: none; display: flex; flex-direction: column; align-items: center; border-right: 1px solid #909090; border-bottom: 1px solid #909090; position: relative; }
.s1 { width: 46px; height: 287px; padding-top: 6px; }
.s2 { width: 44px; height: 172px; padding-top: 6px; border-right: 0; }
.grip-h { position: absolute; top: 2px; left: 3px; right: 3px; height: 3px; background-image: radial-gradient(#aaa 1px, transparent 1.200px); background-size: 3px 3px; }
.panel { width: 569px; flex: none; box-sizing: border-box; display: flex; flex-direction: column; }
.p-top { height: 26px; margin-top: 4px; border-top: 1px solid #c4c4c4; border-bottom: 1px solid #c4c4c4; position: relative; box-sizing: border-box; flex: none; }
.p-dot { position: absolute; left: 278px; top: 7px; width: 9px; height: 9px; border-radius: 50%; background: #bbb; border: 1px solid #888; }
.p-tabs { display: flex; height: 38px; margin-top: 4px; padding-left: 2px; position: relative; flex: none; }
.p-tab { box-sizing: border-box; width: 52px; height: 38px; background: #d0d0d0; border: 1px solid #888; border-left: 0; border-bottom: 1px solid #c4c4c4; display: flex; align-items: center; justify-content: center; }
.p-tab.active { background: #f7f7f7; border-bottom: 0; }
.p-chev { position: absolute; right: 12px; top: 11px; }
.panel > .filter, .panel > .row, .panel > .rollback { border-left: 1px solid #bbb; }
.filter { height: 38px; box-sizing: border-box; flex: none; padding: 5px; display: flex; align-items: center; position: relative; margin-left: 0; }
.filter::after { content: ""; position: absolute; left: 5px; right: 4px; top: 0; bottom: 0; border: 1px solid #ccc; box-sizing: border-box; }
.filter .ico { margin-left: 4px; }
.row { height: 32px; flex: none; display: flex; align-items: center; padding-left: 39px; gap: 6px; position: relative; white-space: nowrap; font-size: 18px; }
.row0 { padding-left: 3px; gap: 5px; letter-spacing: .5px; }
.caret { position: absolute; left: 14px; top: 10px; border-left: 6px solid #555; border-top: 6px solid transparent; border-bottom: 6px solid transparent; }
.rollback { height: 4px; background: #c5c3d8; border-top: 1px solid #aaa; box-sizing: border-box; flex: none; }
.row-last { height: 24px; }
.panel::after { content: ""; flex: 1; border-left: 1px solid #bbb; }
.canvas { flex: 1; position: relative; background: #c3c7d2; border-left: 1px solid #b0b0b0; box-sizing: border-box; }
.scene { position: absolute; left: -1px; top: 0; }
.axis { font-family: "Liberation Serif", serif; font-size: 14px; }
.hud { position: absolute; left: 365px; top: -25px; display: flex; align-items: center; height: 28px; }
.winbtns { position: absolute; left: 1028px; top: -23px; width: 170px; display: flex; justify-content: space-between; align-items: center; }
.notch { position: absolute; left: 0; top: 290px; width: 16px; height: 58px; background: #f7f7f7; border: 1px solid #aaa; border-left: 0; border-radius: 0 4px 4px 0; box-sizing: border-box; }
.notch i { width: 8px; height: 8px; margin: 24px 0 0 2px; border: 1px solid #888; border-radius: 50%; background: #ddd; box-sizing: border-box; }
.task { position: absolute; right: 0; top: 68px; width: 40px; display: flex; flex-direction: column; }
.ttab { box-sizing: border-box; height: 36px; background: #d0d0d0; border: 1px solid #808080; border-right: 0; border-top: 0; display: flex; align-items: center; justify-content: center; }
.ttab.active { background: #fff; border-top: 1px solid #808080; }
.vlabel { position: absolute; left: 10px; bottom: -2px; font-weight: bold; font-size: 20px; line-height: 20px; color: #222; }
.bottom { height: 28px; flex: none; box-sizing: border-box; border-top: 2px solid #b8b8b8; border-bottom: 1px solid #888; background: #f8f8f8; display: flex; padding-left: 118px; position: relative; }
.bottom::before { content: ""; position: absolute; left: 90px; top: 0; bottom: 0; width: 1px; background: #9cc; }
.nav { width: 95px; display: flex; background: #8d8fa3; border-top: 1px solid #333; box-sizing: border-box; flex: none; }
.nav span { flex: 1; display: flex; align-items: center; justify-content: center; background: #a6a8bb; margin: 1px; box-shadow: inset 0 0 0 1px #bbbccb; }
.btab { box-sizing: border-box; background: #d0d0d0; border-right: 1px solid #808080; display: flex; align-items: center; justify-content: center; font-size: 20px; line-height: 1; white-space: nowrap; flex: none; }
.btab.active { background: #fbfbfb; padding-left: 9px; }
.btab:last-child { padding-right: 9px; }
.rstrip { width: 45px; flex: none; box-sizing: border-box; border-left: 2px solid #1b4fb5; position: relative; display: flex; flex-direction: column; padding: 20px 0 0 8px; gap: 10px; }
.rline { position: absolute; left: 2px; right: 0; top: 476px; height: 1px; background: #888; }
.rscroll { position: absolute; left: 28px; top: 12px; width: 11px; height: 84px; background: #555; border-radius: 5px; padding-top: 47px; box-sizing: border-box; }
.rscroll i { height: 1px; margin: 0 1px 3px; background: #3fd66a; }

.redarrow { position: absolute; left: 100px; top: 235px; width: 340px; height: 215px; pointer-events: none; }
.redtext { position: absolute; left: 482px; top: 447px; font-size: 47.600px; line-height: 68px; color: #f5130f; white-space: nowrap; font-family: "Noto Sans CJK SC", sans-serif; }
.wm { position: absolute; left: 1636px; top: 898px; display: flex; }
.wm-t { margin-left: 7px; padding-top: 10px; }
.wm-a { display: flex; align-items: center; height: 42px; font-weight: bold; color: rgba(255, 255, 255, .5); white-space: nowrap; }
.wm-3d { font-family: "Liberation Sans", sans-serif; font-size: 44px; line-height: 42px; letter-spacing: 2px; margin-right: 3px; }
.wm-cjk { font-family: "Noto Sans CJK SC", sans-serif; font-size: 37px; line-height: 42px; }
.wm-b { font-family: "Liberation Sans", sans-serif; font-weight: bold; font-size: 13px; letter-spacing: 2.800px; line-height: 14px; margin-top: 7px; color: rgba(255, 255, 255, .42); white-space: nowrap; }
</style>
